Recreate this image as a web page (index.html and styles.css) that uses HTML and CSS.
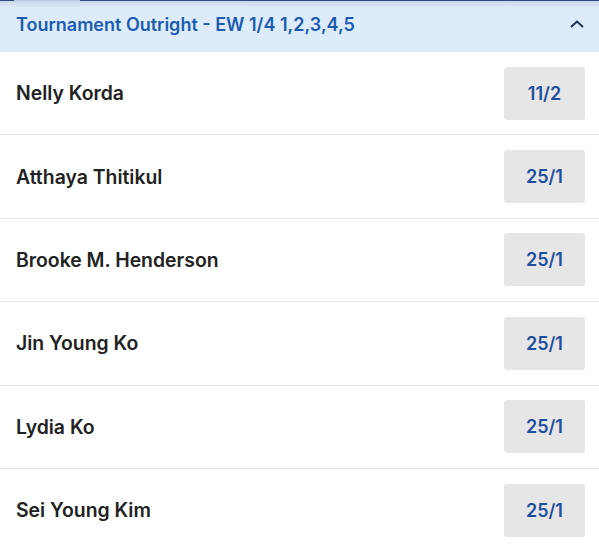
FILE: index.html
```html
<!DOCTYPE html>
<html>
<head>
<meta charset="utf-8">
<link rel="stylesheet" href="styles.css">
</head>
<body>
<div class="market">
  <div class="topline"><span class="tab-gap"></span></div>
  <div class="header">
    <span class="title">Tournament Outright - EW 1/4 1,2,3,4,5</span>
    <svg class="chevron" width="16" height="10" viewBox="0 0 16 10"><path d="M2 8 L8 2.5 L14 8" fill="none" stroke="#1d3557" stroke-width="2"/></svg>
  </div>
  <div class="rows">
    <div class="row"><span class="name">Nelly Korda</span><span class="price">11/2</span></div>
    <div class="row"><span class="name">Atthaya Thitikul</span><span class="price">25/1</span></div>
    <div class="row"><span class="name">Brooke M. Henderson</span><span class="price">25/1</span></div>
    <div class="row"><span class="name">Jin Young Ko</span><span class="price">25/1</span></div>
    <div class="row"><span class="name">Lydia Ko</span><span class="price">25/1</span></div>
    <div class="row"><span class="name">Sei Young Kim</span><span class="price">25/1</span></div>
  </div>
</div>
</body>
</html>
```
FILE: styles.css
```css
html, body { margin: 0; padding: 0; background: #fff; }
body { font-family: Inter, Roboto, sans-serif; width: 599px; height: 551px; overflow: hidden; }
.market { display: flex; flex-direction: column; }
.topline { height: 1px; background: #2c4a78; display: flex; }
.tab-gap { margin-left: 14px; width: 66px; background: #b9c9dd; }
.header {
  height: 51px;
  background: linear-gradient(#c9d9e9 0px, #dcebf9 7px, #dcedfa 100%);
  display: flex; align-items: center; justify-content: space-between;
  padding: 0 14px 4px 16px;
  box-sizing: border-box;
}
.title { color: #1c5bb0; font-weight: 600; font-size: 18px; }
.chevron { display: block; margin-bottom: 2px; }
.rows { display: flex; flex-direction: column; }
.row {
  height: 83.4px; box-sizing: border-box;
  border-bottom: 1px solid #e3e3e3;
  display: flex; align-items: center; justify-content: space-between;
  padding: 0 14px 0 16px;
}
.name { color: #222; font-weight: 600; font-size: 19.4px; }
.price {
  width: 81px; height: 53px; background: #e6e6e6; border-radius: 3px;
  display: flex; align-items: center; justify-content: center;
  color: #1f4f9c; font-weight: 600; font-size: 18px;
}
```
